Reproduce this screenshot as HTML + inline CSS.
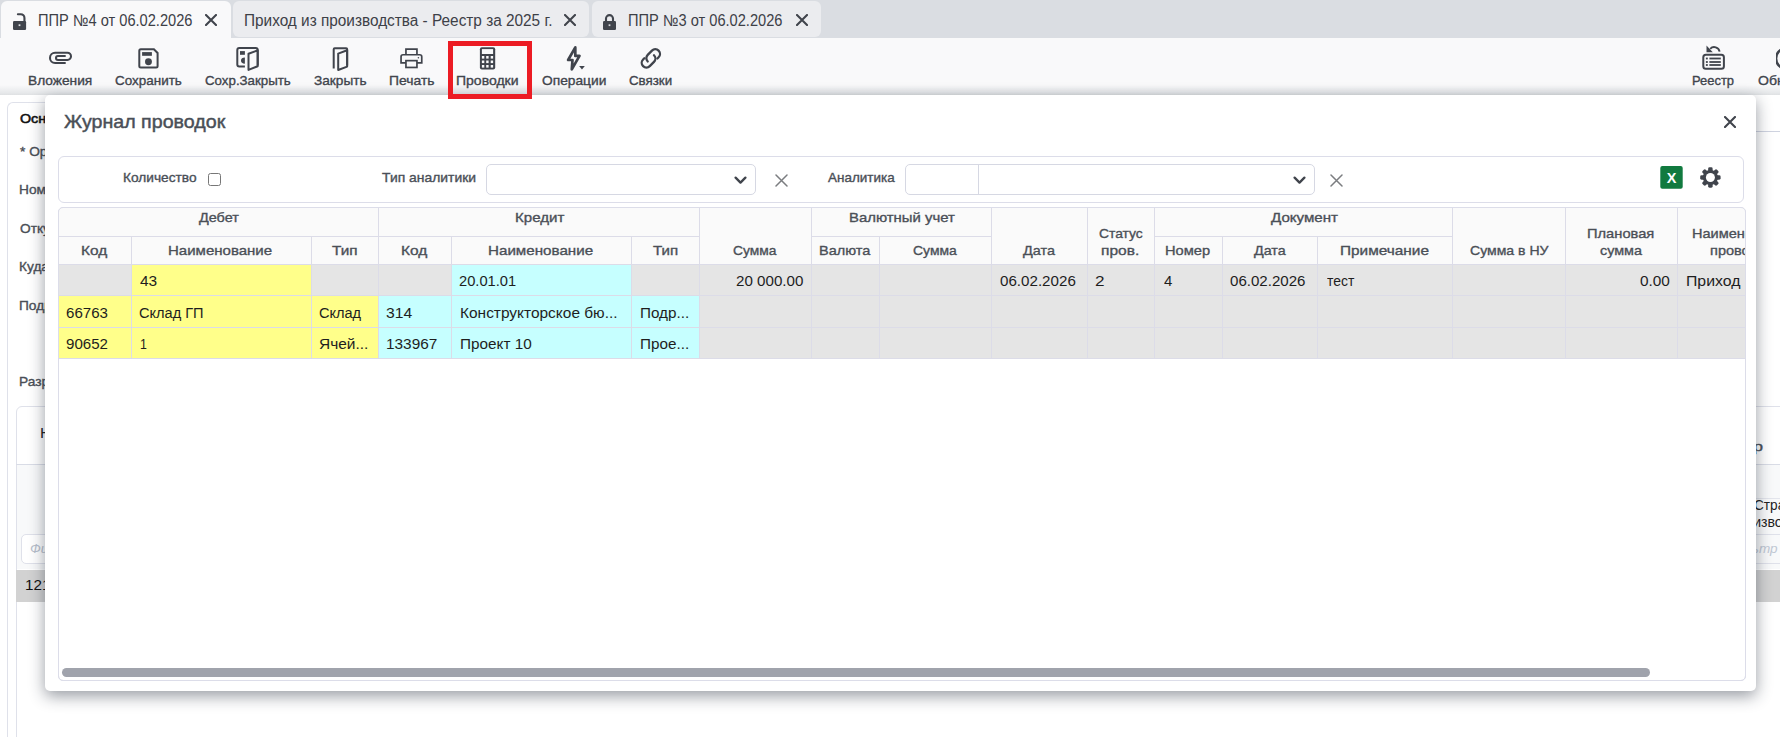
<!DOCTYPE html>
<html><head><meta charset="utf-8"><style>
html,body{margin:0;padding:0;width:1780px;height:737px;overflow:hidden;background:#fff;font-family:"Liberation Sans", sans-serif;}
.t{position:absolute;white-space:nowrap;}
.b{position:absolute;box-sizing:border-box;}
</style></head><body>
<div class="b" style="left:0px;top:0px;width:1780px;height:38px;background:#dadde2;"></div>
<div class="b" style="left:1px;top:1px;width:230px;height:38px;background:#f9f9fa;border-radius:6px 6px 0 0;"></div>
<div class="b" style="left:233px;top:1px;width:356px;height:36px;background:#ebecef;border-radius:6px;"></div>
<div class="b" style="left:592px;top:1px;width:229px;height:36px;background:#ebecef;border-radius:6px;"></div>
<svg class="b" style="left:13px;top:13px;" width="14" height="17" viewBox="0 0 14 17"><path d="M4.9 1.25 H7.75 A3.7 3.7 0 0 1 11.45 4.95 V8.5" fill="none" stroke="#40444c" stroke-width="2.1" stroke-linecap="round"/><rect x="0" y="8" width="13.1" height="8.9" rx="1.2" fill="#40444c"/><rect x="5.6" y="11.3" width="1.8" height="1.8" fill="#f8f9fa" opacity=".85"/></svg>
<svg class="b" style="left:603px;top:14px;" width="13" height="16" viewBox="0 0 13 16"><path d="M3 7 V4.6 A3.5 3.5 0 0 1 10 4.6 V7" fill="none" stroke="#40444c" stroke-width="2.1"/><rect x="0" y="7" width="13" height="9" rx="1.2" fill="#40444c"/><rect x="5.6" y="10.3" width="1.8" height="1.8" fill="#ebecef" opacity=".85"/></svg>
<div class="t" style="top:10.86px;font-size:16px;line-height:19.2px;font-weight:400;color:#3d4047;left:37.79px;transform:scaleX(0.9137);transform-origin:0 0;">ППР №4 от 06.02.2026</div>
<svg class="b" style="left:205px;top:14px;" width="12" height="12" viewBox="0 0 12 12"><path d="M1 1 L11 11 M11 1 L1 11" stroke="#40444c" stroke-width="2.1" stroke-linecap="round"/></svg>
<div class="t" style="top:10.86px;font-size:16px;line-height:19.2px;font-weight:400;color:#3d4047;left:243.84px;transform:scaleX(0.9596);transform-origin:0 0;">Приход из производства - Реестр за 2025 г.</div>
<svg class="b" style="left:564px;top:14px;" width="12" height="12" viewBox="0 0 12 12"><path d="M1 1 L11 11 M11 1 L1 11" stroke="#40444c" stroke-width="2.1" stroke-linecap="round"/></svg>
<div class="t" style="top:10.86px;font-size:16px;line-height:19.2px;font-weight:400;color:#3d4047;left:627.99px;transform:scaleX(0.9137);transform-origin:0 0;">ППР №3 от 06.02.2026</div>
<svg class="b" style="left:796px;top:14px;" width="12" height="12" viewBox="0 0 12 12"><path d="M1 1 L11 11 M11 1 L1 11" stroke="#40444c" stroke-width="2.1" stroke-linecap="round"/></svg>
<div class="b" style="left:0px;top:38px;width:1780px;height:57px;background:linear-gradient(#f9f9fa 0px,#f9f9fa 47px,#e6e8ea 55px,#dfe1e3 57px);"></div>
<div class="t" style="top:72.50px;font-size:13px;line-height:15.6px;font-weight:400;color:#41454d;-webkit-text-stroke:0.35px #41454d;left:27.94px;transform:scaleX(1.0559);transform-origin:0 0;">Вложения</div>
<div class="t" style="top:72.50px;font-size:13px;line-height:15.6px;font-weight:400;color:#41454d;-webkit-text-stroke:0.35px #41454d;left:114.80px;transform:scaleX(1.0344);transform-origin:0 0;">Сохранить</div>
<div class="t" style="top:72.50px;font-size:13px;line-height:15.6px;font-weight:400;color:#41454d;-webkit-text-stroke:0.35px #41454d;left:204.50px;transform:scaleX(1.0226);transform-origin:0 0;">Сохр.Закрыть</div>
<div class="t" style="top:72.50px;font-size:13px;line-height:15.6px;font-weight:400;color:#41454d;-webkit-text-stroke:0.35px #41454d;left:313.50px;transform:scaleX(1.0500);transform-origin:0 0;">Закрыть</div>
<div class="t" style="top:72.50px;font-size:13px;line-height:15.6px;font-weight:400;color:#41454d;-webkit-text-stroke:0.35px #41454d;left:388.63px;transform:scaleX(1.0683);transform-origin:0 0;">Печать</div>
<div class="t" style="top:72.50px;font-size:13px;line-height:15.6px;font-weight:400;color:#41454d;-webkit-text-stroke:0.35px #41454d;left:455.92px;transform:scaleX(1.0772);transform-origin:0 0;">Проводки</div>
<div class="t" style="top:72.50px;font-size:13px;line-height:15.6px;font-weight:400;color:#41454d;-webkit-text-stroke:0.35px #41454d;left:542.00px;transform:scaleX(1.0583);transform-origin:0 0;">Операции</div>
<div class="t" style="top:72.50px;font-size:13px;line-height:15.6px;font-weight:400;color:#41454d;-webkit-text-stroke:0.35px #41454d;left:629.30px;transform:scaleX(1.0238);transform-origin:0 0;">Связки</div>
<div class="t" style="top:72.50px;font-size:13px;line-height:15.6px;font-weight:400;color:#41454d;-webkit-text-stroke:0.35px #41454d;left:1692.20px;transform:scaleX(0.9951);transform-origin:0 0;">Реестр</div>
<div class="t" style="top:72.50px;font-size:13px;line-height:15.6px;font-weight:400;color:#41454d;-webkit-text-stroke:0.35px #41454d;left:1757.60px;transform:scaleX(1.0800);transform-origin:0 0;">Обновить</div>
<svg class="b" style="left:46px;top:48px;" width="28" height="18" viewBox="0 0 28 18"><path d="M19.7 8 H11.95 A1.95 1.95 0 0 0 11.95 11.9 H21.45 A3.55 3.55 0 0 0 21.45 4.8 H9.1 A5.1 5.1 0 0 0 9.1 15 H19.7" fill="none" stroke="#40444c" stroke-width="2.05"/></svg>
<svg class="b" style="left:136px;top:46px;" width="24" height="24" viewBox="0 0 24 24"><path d="M4.8 3.3 H17.9 L21.6 7 V19.9 Q21.6 21.4 20.1 21.4 H4.8 Q3.3 21.4 3.3 19.9 V4.8 Q3.3 3.3 4.8 3.3 Z" fill="none" stroke="#40444c" stroke-width="2"/><rect x="6.1" y="6.1" width="9.8" height="3.7" fill="#40444c"/><circle cx="12.45" cy="15.7" r="3.45" fill="#40444c"/></svg>
<svg class="b" style="left:235px;top:46px;" width="25" height="26" viewBox="0 0 25 26"><path d="M9.9 20.4 H4.3 Q2.3 20.4 2.3 18.4 V4.1 Q2.3 2.1 4.3 2.1 H20.7 Q22.7 2.1 22.7 4.1 V19.5" fill="none" stroke="#40444c" stroke-width="2"/><path d="M13.5 7.8 L22.7 4.3 V20.2 L13.5 23.9 Z" fill="none" stroke="#40444c" stroke-width="2" stroke-linejoin="round"/><rect x="5" y="5.1" width="4.9" height="3.7" fill="#40444c"/><path d="M9.9 11.4 A3.9 3.15 0 0 0 9.9 17.7 Z" fill="#40444c"/></svg>
<svg class="b" style="left:332px;top:46px;" width="18" height="26" viewBox="0 0 18 26"><path d="M1.7 22.6 V3.3 Q1.7 2.3 2.7 2.3 H14.15 Q15.15 2.3 15.15 3.3 V19.5" fill="none" stroke="#40444c" stroke-width="2"/><path d="M6.2 7.6 L15.15 4.2 V20.6 L6.2 24 Z" fill="none" stroke="#40444c" stroke-width="2" stroke-linejoin="round"/></svg>
<svg class="b" style="left:399px;top:47px;" width="25" height="23" viewBox="0 0 25 23"><path d="M6.95 7 V2.05 H17.95 V7" fill="none" stroke="#40444c" stroke-width="1.7"/><path d="M6.95 15.9 H2.05 V9.75 Q2.05 7.75 4.05 7.75 H20.75 Q22.75 7.75 22.75 9.75 V15.9 H17.95" fill="none" stroke="#40444c" stroke-width="1.7"/><rect x="6.95" y="13.65" width="11" height="6.8" fill="none" stroke="#40444c" stroke-width="1.7"/><circle cx="19.4" cy="10.7" r=".8" fill="#40444c"/></svg>
<svg class="b" style="left:479px;top:47px;" width="17" height="23" viewBox="0 0 17 23"><rect x="0.9" y="0.25" width="15.3" height="22.35" rx="2" fill="#40444c"/><rect x="2.9" y="2.1" width="11.2" height="4.9" fill="#f8f9fa"/><rect x="2.9" y="9" width="2.4" height="2.6" fill="#f8f9fa"/><rect x="2.9" y="13.5" width="2.4" height="2.6" fill="#f8f9fa"/><rect x="2.9" y="18" width="2.4" height="2.6" fill="#f8f9fa"/><rect x="7.2" y="9" width="2.4" height="2.6" fill="#f8f9fa"/><rect x="7.2" y="13.5" width="2.4" height="2.6" fill="#f8f9fa"/><rect x="7.2" y="18" width="2.4" height="2.6" fill="#f8f9fa"/><rect x="11.7" y="9" width="2.4" height="2.6" fill="#f8f9fa"/><rect x="11.7" y="13.5" width="2.4" height="2.6" fill="#f8f9fa"/><rect x="11.7" y="18" width="2.4" height="2.6" fill="#f8f9fa"/></svg>
<svg class="b" style="left:565px;top:45px;" width="21" height="27" viewBox="0 0 21 27"><path d="M10.3 2.4 L3.1 15.0 H7.5 L6.8 24.3 L14.5 10.9 H10.3 Z" fill="none" stroke="#40444c" stroke-width="2.7" stroke-linejoin="round"/><path d="M14.1 21 H19.8 L16.95 24.6 Z" fill="#40444c"/></svg>
<svg class="b" style="left:639px;top:47px;" width="24" height="24" viewBox="0 0 24 24"><g transform="translate(11.85 11.4) rotate(-45)" fill="none" stroke="#40444c" stroke-width="2.3" stroke-linecap="round"><path d="M4.56 4.7 H6.26 A4.7 4.7 0 0 0 6.26 -4.7 H0.26 A4.7 4.7 0 0 0 -4.44 0"/><path d="M-4.56 -4.7 H-6.26 A4.7 4.7 0 0 0 -6.26 4.7 H-0.26 A4.7 4.7 0 0 0 4.44 0"/></g></svg>
<svg class="b" style="left:1701px;top:45px;" width="25" height="26" viewBox="0 0 25 26"><rect x="2.3" y="9.8" width="20.6" height="13.9" rx="2.5" fill="none" stroke="#40444c" stroke-width="2"/><rect x="4.9" y="12.6" width="1.9" height="1.8" fill="#40444c"/><rect x="8.4" y="12.6" width="11.4" height="1.8" fill="#40444c"/><rect x="4.9" y="16.1" width="1.9" height="1.8" fill="#40444c"/><rect x="8.4" y="16.1" width="11.4" height="1.8" fill="#40444c"/><rect x="4.9" y="19.1" width="1.9" height="1.8" fill="#40444c"/><rect x="8.4" y="19.1" width="11.4" height="1.8" fill="#40444c"/><path d="M9.2 3.8 A5.5 5.5 0 0 1 18.6 6.6" fill="none" stroke="#40444c" stroke-width="1.9"/><path d="M5.5 0.6 V7.3 H11.8 Z" fill="#40444c"/></svg>
<svg class="b" style="left:1776px;top:47px;" width="12" height="24" viewBox="0 0 12 24"><path d="M10 1.5 A10 10 0 0 0 10 21.5" fill="none" stroke="#40444c" stroke-width="2.6"/></svg>
<div class="b" style="left:7px;top:102px;width:1745px;height:700px;border:1px solid #dfe1ea;border-right:none;border-radius:6px 0 0 6px;background:#fff;"></div>
<div class="t" style="top:111.20px;font-size:13px;line-height:15.6px;font-weight:400;color:#111;-webkit-text-stroke:0.55px #111;left:20.00px;transform:scaleX(1.1000);transform-origin:0 0;">Основное</div>
<div class="b" style="left:1700px;top:131px;width:80px;height:1px;background:#cfd3e0;"></div>
<div class="t" style="top:144.78px;font-size:12.7px;line-height:15.24px;font-weight:400;color:#4a4f57;-webkit-text-stroke:0.35px #4a4f57;left:20.30px;transform:scaleX(1.0800);transform-origin:0 0;">* Организация</div>
<div class="t" style="top:182.68px;font-size:12.7px;line-height:15.24px;font-weight:400;color:#4a4f57;-webkit-text-stroke:0.35px #4a4f57;left:19.22px;transform:scaleX(1.0800);transform-origin:0 0;">Номер</div>
<div class="t" style="top:221.68px;font-size:12.7px;line-height:15.24px;font-weight:400;color:#4a4f57;-webkit-text-stroke:0.35px #4a4f57;left:20.30px;transform:scaleX(1.0800);transform-origin:0 0;">Откуда</div>
<div class="t" style="top:259.98px;font-size:12.7px;line-height:15.24px;font-weight:400;color:#4a4f57;-webkit-text-stroke:0.35px #4a4f57;left:19.22px;transform:scaleX(1.0800);transform-origin:0 0;">Куда</div>
<div class="t" style="top:298.68px;font-size:12.7px;line-height:15.24px;font-weight:400;color:#4a4f57;-webkit-text-stroke:0.35px #4a4f57;left:19.22px;transform:scaleX(1.0800);transform-origin:0 0;">Подразделение</div>
<div class="t" style="top:374.88px;font-size:12.7px;line-height:15.24px;font-weight:400;color:#4a4f57;-webkit-text-stroke:0.35px #4a4f57;left:19.22px;transform:scaleX(1.0800);transform-origin:0 0;">Разработчик</div>
<div class="b" style="left:16px;top:406px;width:1800px;height:400px;border:1px solid #dfe1ea;border-radius:6px;"></div>
<div class="t" style="top:423.80px;font-size:15px;line-height:18.0px;font-weight:400;color:#222;left:39.75px;transform:scaleX(1.0500);transform-origin:0 0;">Номенклатура</div>
<div class="b" style="left:17px;top:464px;width:1800px;height:105px;background:#f8f9fa;"></div>
<div class="b" style="left:16px;top:464px;width:1800px;height:1px;background:#d9dce6;"></div>
<div class="b" style="left:1700px;top:498px;width:80px;height:1px;background:#e3e5ec;"></div>
<div class="b" style="left:1700px;top:534px;width:80px;height:1px;background:#dfe1ea;"></div>
<div class="b" style="left:1700px;top:563px;width:80px;height:1px;background:#dfe1ea;"></div>
<div class="b" style="left:21px;top:534px;width:200px;height:30px;border:1px solid #dfe1ea;border-radius:5px;background:#fff;"></div>
<div class="t" style="top:541.22px;font-size:13.5px;line-height:16.2px;font-weight:400;color:#b8c0cc;font-style:italic;left:30.00px;">Фильтр</div>
<div class="b" style="left:16px;top:570px;width:1800px;height:32px;background:#d2d2d2;"></div>
<div class="t" style="top:576.69px;font-size:14.8px;line-height:17.76px;font-weight:400;color:#111;left:24.77px;transform:scaleX(1.0300);transform-origin:0 0;">121</div>
<div class="t" style="top:440.08px;font-size:12.7px;line-height:15.24px;font-weight:400;color:#4a4f57;-webkit-text-stroke:0.35px #4a4f57;left:1708.62px;transform:scaleX(1.3842);transform-origin:0 0;">Номер</div>
<div class="t" style="top:496.99px;font-size:14.8px;line-height:17.76px;font-weight:400;color:#222;left:1754.38px;transform:scaleX(0.9200);transform-origin:0 0;">Страна</div>
<div class="t" style="top:513.69px;font-size:14.8px;line-height:17.76px;font-weight:400;color:#222;left:1730.05px;transform:scaleX(0.9500);transform-origin:0 0;">производства</div>
<div class="t" style="top:541.22px;font-size:13.5px;line-height:16.2px;font-weight:400;color:#c0c8d4;font-style:italic;left:1726.00px;">Фильтр по</div>
<div class="b" style="left:45px;top:95px;width:1711px;height:596px;background:#fff;border-radius:5px;box-shadow:0 5px 16px rgba(28,38,52,.46);"></div>
<div class="t" style="top:111.42px;font-size:19px;line-height:22.8px;font-weight:400;color:#4a4f57;-webkit-text-stroke:0.45px #4a4f57;left:63.70px;transform:scaleX(1.0333);transform-origin:0 0;">Журнал проводок</div>
<svg class="b" style="left:1723.5px;top:115.6px;" width="12" height="12" viewBox="0 0 12 12"><path d="M1 1 L11 11 M11 1 L1 11" stroke="#40444c" stroke-width="2.1" stroke-linecap="round"/></svg>
<div class="b" style="left:58px;top:156px;width:1686px;height:47px;border:1px solid #dcdde9;border-radius:6px;"></div>
<div class="t" style="top:171.07px;font-size:12.6px;line-height:15.12px;font-weight:400;color:#4a4f57;-webkit-text-stroke:0.35px #4a4f57;left:122.91px;transform:scaleX(1.0881);transform-origin:0 0;">Количество</div>
<div class="b" style="left:208px;top:173px;width:13px;height:13px;border:1.3px solid #777;border-radius:2.5px;"></div>
<div class="t" style="top:171.17px;font-size:12.6px;line-height:15.12px;font-weight:400;color:#4a4f57;-webkit-text-stroke:0.35px #4a4f57;left:382.40px;transform:scaleX(1.1035);transform-origin:0 0;">Тип аналитики</div>
<div class="b" style="left:486px;top:164px;width:270px;height:31px;border:1px solid #d6d8e3;border-radius:5px;"></div>
<svg class="b" style="left:733.5px;top:175.5px;" width="13" height="9" viewBox="0 0 13 9"><path d="M1.6 1.6 L6.5 6.6 L11.4 1.6" fill="none" stroke="#40444c" stroke-width="2.3" stroke-linecap="round" stroke-linejoin="round"/></svg>
<svg class="b" style="left:774.5px;top:173.5px;" width="13" height="13" viewBox="0 0 13 13"><path d="M1 1 L12 12 M12 1 L1 12" stroke="#7b7d80" stroke-width="1.5" stroke-linecap="round"/></svg>
<div class="t" style="top:171.17px;font-size:12.6px;line-height:15.12px;font-weight:400;color:#4a4f57;-webkit-text-stroke:0.35px #4a4f57;left:828.10px;transform:scaleX(1.0698);transform-origin:0 0;">Аналитика</div>
<div class="b" style="left:905px;top:164px;width:410px;height:31px;border:1px solid #d6d8e3;border-radius:5px;"></div>
<div class="b" style="left:978px;top:165px;width:1px;height:29px;background:#d6d8e3;"></div>
<svg class="b" style="left:1292.5px;top:175.5px;" width="13" height="9" viewBox="0 0 13 9"><path d="M1.6 1.6 L6.5 6.6 L11.4 1.6" fill="none" stroke="#40444c" stroke-width="2.3" stroke-linecap="round" stroke-linejoin="round"/></svg>
<svg class="b" style="left:1330px;top:173.5px;" width="13" height="13" viewBox="0 0 13 13"><path d="M1 1 L12 12 M12 1 L1 12" stroke="#7b7d80" stroke-width="1.5" stroke-linecap="round"/></svg>
<svg class="b" style="left:1660px;top:166px;" width="23" height="23" viewBox="0 0 23 23"><rect x="0.3" y="0.1" width="22.4" height="22.6" rx="2" fill="#117a3f"/><text x="11.5" y="17" text-anchor="middle" font-family="Liberation Sans" font-weight="700" font-size="14.5" fill="#fff">X</text></svg>
<svg class="b" style="left:1699px;top:166px;" width="23" height="23" viewBox="0 0 23 23"><g transform="translate(11.4 11.5)"><rect x="-2.25" y="-10.2" width="4.5" height="5" rx="1.4" transform="rotate(0)" fill="#40444c"/><rect x="-2.25" y="-10.2" width="4.5" height="5" rx="1.4" transform="rotate(45)" fill="#40444c"/><rect x="-2.25" y="-10.2" width="4.5" height="5" rx="1.4" transform="rotate(90)" fill="#40444c"/><rect x="-2.25" y="-10.2" width="4.5" height="5" rx="1.4" transform="rotate(135)" fill="#40444c"/><rect x="-2.25" y="-10.2" width="4.5" height="5" rx="1.4" transform="rotate(180)" fill="#40444c"/><rect x="-2.25" y="-10.2" width="4.5" height="5" rx="1.4" transform="rotate(225)" fill="#40444c"/><rect x="-2.25" y="-10.2" width="4.5" height="5" rx="1.4" transform="rotate(270)" fill="#40444c"/><rect x="-2.25" y="-10.2" width="4.5" height="5" rx="1.4" transform="rotate(315)" fill="#40444c"/><circle r="7.6" fill="#40444c"/><circle r="4.5" fill="#fff"/></g></svg>
<div class="b" style="left:58px;top:207px;width:1688px;height:474px;border:1px solid #dcdde9;border-radius:5px;overflow:hidden;background:#fff;"></div>
<div class="b" style="left:59px;top:208px;width:1686px;height:56px;background:#fafafa;"></div>
<div class="b" style="left:59px;top:264px;width:1686px;height:31px;background:#e5e5e5;"></div>
<div class="b" style="left:58px;top:264px;width:73px;height:31px;background:#e5e5e5;"></div>
<div class="b" style="left:131px;top:264px;width:180px;height:31px;background:#ffff8a;"></div>
<div class="b" style="left:311px;top:264px;width:67px;height:31px;background:#e5e5e5;"></div>
<div class="b" style="left:378px;top:264px;width:73px;height:31px;background:#e5e5e5;"></div>
<div class="b" style="left:451px;top:264px;width:180px;height:31px;background:#c6ffff;"></div>
<div class="b" style="left:631px;top:264px;width:68px;height:31px;background:#e5e5e5;"></div>
<div class="b" style="left:59px;top:295px;width:1686px;height:32px;background:#e5e5e5;"></div>
<div class="b" style="left:58px;top:295px;width:73px;height:32px;background:#ffff8a;"></div>
<div class="b" style="left:131px;top:295px;width:180px;height:32px;background:#ffff8a;"></div>
<div class="b" style="left:311px;top:295px;width:67px;height:32px;background:#ffff8a;"></div>
<div class="b" style="left:378px;top:295px;width:73px;height:32px;background:#c6ffff;"></div>
<div class="b" style="left:451px;top:295px;width:180px;height:32px;background:#c6ffff;"></div>
<div class="b" style="left:631px;top:295px;width:68px;height:32px;background:#c6ffff;"></div>
<div class="b" style="left:59px;top:327px;width:1686px;height:31px;background:#e5e5e5;"></div>
<div class="b" style="left:58px;top:327px;width:73px;height:31px;background:#ffff8a;"></div>
<div class="b" style="left:131px;top:327px;width:180px;height:31px;background:#ffff8a;"></div>
<div class="b" style="left:311px;top:327px;width:67px;height:31px;background:#ffff8a;"></div>
<div class="b" style="left:378px;top:327px;width:73px;height:31px;background:#c6ffff;"></div>
<div class="b" style="left:451px;top:327px;width:180px;height:31px;background:#c6ffff;"></div>
<div class="b" style="left:631px;top:327px;width:68px;height:31px;background:#c6ffff;"></div>
<div class="b" style="left:59px;top:236px;width:320px;height:1px;background:#dcdce8;"></div>
<div class="b" style="left:378px;top:236px;width:321px;height:1px;background:#dcdce8;"></div>
<div class="b" style="left:811px;top:236px;width:180px;height:1px;background:#dcdce8;"></div>
<div class="b" style="left:1154px;top:236px;width:298px;height:1px;background:#dcdce8;"></div>
<div class="b" style="left:59px;top:264px;width:1686px;height:1px;background:#dcdce8;"></div>
<div class="b" style="left:59px;top:295px;width:1686px;height:1px;background:#dcdce8;"></div>
<div class="b" style="left:59px;top:327px;width:1686px;height:1px;background:#dcdce8;"></div>
<div class="b" style="left:59px;top:358px;width:1686px;height:1px;background:#dcdce8;"></div>
<div class="b" style="left:378px;top:208px;width:1px;height:150px;background:#dcdce8;"></div>
<div class="b" style="left:699px;top:208px;width:1px;height:150px;background:#dcdce8;"></div>
<div class="b" style="left:811px;top:208px;width:1px;height:150px;background:#dcdce8;"></div>
<div class="b" style="left:991px;top:208px;width:1px;height:150px;background:#dcdce8;"></div>
<div class="b" style="left:1087px;top:208px;width:1px;height:150px;background:#dcdce8;"></div>
<div class="b" style="left:1154px;top:208px;width:1px;height:150px;background:#dcdce8;"></div>
<div class="b" style="left:1452px;top:208px;width:1px;height:150px;background:#dcdce8;"></div>
<div class="b" style="left:1565px;top:208px;width:1px;height:150px;background:#dcdce8;"></div>
<div class="b" style="left:1677px;top:208px;width:1px;height:150px;background:#dcdce8;"></div>
<div class="b" style="left:131px;top:236px;width:1px;height:122px;background:#dcdce8;"></div>
<div class="b" style="left:311px;top:236px;width:1px;height:122px;background:#dcdce8;"></div>
<div class="b" style="left:451px;top:236px;width:1px;height:122px;background:#dcdce8;"></div>
<div class="b" style="left:631px;top:236px;width:1px;height:122px;background:#dcdce8;"></div>
<div class="b" style="left:879px;top:236px;width:1px;height:122px;background:#dcdce8;"></div>
<div class="b" style="left:1222px;top:236px;width:1px;height:122px;background:#dcdce8;"></div>
<div class="b" style="left:1317px;top:236px;width:1px;height:122px;background:#dcdce8;"></div>
<div class="t" style="top:210.43px;font-size:13.6px;line-height:16.32px;font-weight:400;color:#4a4f57;-webkit-text-stroke:0.35px #4a4f57;left:198.80px;transform:scaleX(1.0605);transform-origin:0 0;">Дебет</div>
<div class="t" style="top:210.43px;font-size:13.6px;line-height:16.32px;font-weight:400;color:#4a4f57;-webkit-text-stroke:0.35px #4a4f57;left:514.79px;transform:scaleX(1.1091);transform-origin:0 0;">Кредит</div>
<div class="t" style="top:210.43px;font-size:13.6px;line-height:16.32px;font-weight:400;color:#4a4f57;-webkit-text-stroke:0.35px #4a4f57;left:849.30px;transform:scaleX(1.0958);transform-origin:0 0;">Валютный учет</div>
<div class="t" style="top:210.43px;font-size:13.6px;line-height:16.32px;font-weight:400;color:#4a4f57;-webkit-text-stroke:0.35px #4a4f57;left:1271.30px;transform:scaleX(1.1117);transform-origin:0 0;">Документ</div>
<div class="t" style="top:243.33px;font-size:13.6px;line-height:16.32px;font-weight:400;color:#4a4f57;-webkit-text-stroke:0.35px #4a4f57;left:80.97px;transform:scaleX(1.1318);transform-origin:0 0;">Код</div>
<div class="t" style="top:243.33px;font-size:13.6px;line-height:16.32px;font-weight:400;color:#4a4f57;-webkit-text-stroke:0.35px #4a4f57;left:168.30px;transform:scaleX(1.1043);transform-origin:0 0;">Наименование</div>
<div class="t" style="top:243.33px;font-size:13.6px;line-height:16.32px;font-weight:400;color:#4a4f57;-webkit-text-stroke:0.35px #4a4f57;left:332.20px;transform:scaleX(1.1273);transform-origin:0 0;">Тип</div>
<div class="t" style="top:243.33px;font-size:13.6px;line-height:16.32px;font-weight:400;color:#4a4f57;-webkit-text-stroke:0.35px #4a4f57;left:401.26px;transform:scaleX(1.1364);transform-origin:0 0;">Код</div>
<div class="t" style="top:243.33px;font-size:13.6px;line-height:16.32px;font-weight:400;color:#4a4f57;-webkit-text-stroke:0.35px #4a4f57;left:488.38px;transform:scaleX(1.1151);transform-origin:0 0;">Наименование</div>
<div class="t" style="top:243.33px;font-size:13.6px;line-height:16.32px;font-weight:400;color:#4a4f57;-webkit-text-stroke:0.35px #4a4f57;left:652.70px;transform:scaleX(1.1091);transform-origin:0 0;">Тип</div>
<div class="t" style="top:243.33px;font-size:13.6px;line-height:16.32px;font-weight:400;color:#4a4f57;-webkit-text-stroke:0.35px #4a4f57;left:733.00px;transform:scaleX(1.0163);transform-origin:0 0;">Сумма</div>
<div class="t" style="top:243.33px;font-size:13.6px;line-height:16.32px;font-weight:400;color:#4a4f57;-webkit-text-stroke:0.35px #4a4f57;left:818.83px;transform:scaleX(1.0681);transform-origin:0 0;">Валюта</div>
<div class="t" style="top:243.33px;font-size:13.6px;line-height:16.32px;font-weight:400;color:#4a4f57;-webkit-text-stroke:0.35px #4a4f57;left:912.90px;transform:scaleX(1.0256);transform-origin:0 0;">Сумма</div>
<div class="t" style="top:243.33px;font-size:13.6px;line-height:16.32px;font-weight:400;color:#4a4f57;-webkit-text-stroke:0.35px #4a4f57;left:1022.90px;transform:scaleX(1.0600);transform-origin:0 0;">Дата</div>
<div class="t" style="top:226.43px;font-size:13.6px;line-height:16.32px;font-weight:400;color:#4a4f57;-webkit-text-stroke:0.35px #4a4f57;left:1099.00px;transform:scaleX(1.0186);transform-origin:0 0;">Статус</div>
<div class="t" style="top:243.33px;font-size:13.6px;line-height:16.32px;font-weight:400;color:#4a4f57;-webkit-text-stroke:0.35px #4a4f57;left:1101.16px;transform:scaleX(1.1438);transform-origin:0 0;">пров.</div>
<div class="t" style="top:243.33px;font-size:13.6px;line-height:16.32px;font-weight:400;color:#4a4f57;-webkit-text-stroke:0.35px #4a4f57;left:1165.12px;transform:scaleX(1.0780);transform-origin:0 0;">Номер</div>
<div class="t" style="top:243.33px;font-size:13.6px;line-height:16.32px;font-weight:400;color:#4a4f57;-webkit-text-stroke:0.35px #4a4f57;left:1253.70px;transform:scaleX(1.0533);transform-origin:0 0;">Дата</div>
<div class="t" style="top:243.33px;font-size:13.6px;line-height:16.32px;font-weight:400;color:#4a4f57;-webkit-text-stroke:0.35px #4a4f57;left:1340.37px;transform:scaleX(1.1312);transform-origin:0 0;">Примечание</div>
<div class="t" style="top:243.33px;font-size:13.6px;line-height:16.32px;font-weight:400;color:#4a4f57;-webkit-text-stroke:0.35px #4a4f57;left:1469.70px;transform:scaleX(1.0342);transform-origin:0 0;">Сумма в НУ</div>
<div class="t" style="top:226.43px;font-size:13.6px;line-height:16.32px;font-weight:400;color:#4a4f57;-webkit-text-stroke:0.35px #4a4f57;left:1587.12px;transform:scaleX(1.0803);transform-origin:0 0;">Плановая</div>
<div class="t" style="top:243.33px;font-size:13.6px;line-height:16.32px;font-weight:400;color:#4a4f57;-webkit-text-stroke:0.35px #4a4f57;left:1600.00px;transform:scaleX(1.0575);transform-origin:0 0;">сумма</div>
<div class="b" style="left:1678px;top:208px;width:67px;height:56px;overflow:hidden;"><div class="b" style="left:-1678px;top:-208px;width:1780px;height:300px;"><div class="t" style="top:226.43px;font-size:13.6px;line-height:16.32px;font-weight:400;color:#4a4f57;-webkit-text-stroke:0.35px #4a4f57;left:1692.33px;transform:scaleX(1.0700);transform-origin:0 0;">Наименование</div>
<div class="t" style="top:243.33px;font-size:13.6px;line-height:16.32px;font-weight:400;color:#4a4f57;-webkit-text-stroke:0.35px #4a4f57;left:1710.43px;transform:scaleX(1.0700);transform-origin:0 0;">проводки</div>
</div></div><div class="t" style="top:272.11px;font-size:15.2px;line-height:18.24px;font-weight:400;color:#1e1e1e;left:139.90px;transform:scaleX(1.0187);transform-origin:0 0;">43</div>
<div class="t" style="top:272.11px;font-size:15.2px;line-height:18.24px;font-weight:400;color:#1e1e1e;left:459.43px;transform:scaleX(0.9672);transform-origin:0 0;">20.01.01</div>
<div class="t" style="top:272.11px;font-size:15.2px;line-height:18.24px;font-weight:400;color:#1e1e1e;left:736.40px;transform:scaleX(0.9970);transform-origin:0 0;">20 000.00</div>
<div class="t" style="top:272.11px;font-size:15.2px;line-height:18.24px;font-weight:400;color:#1e1e1e;left:999.60px;transform:scaleX(0.9973);transform-origin:0 0;">06.02.2026</div>
<div class="t" style="top:272.11px;font-size:15.2px;line-height:18.24px;font-weight:400;color:#1e1e1e;left:1094.87px;transform:scaleX(1.1286);transform-origin:0 0;">2</div>
<div class="t" style="top:272.11px;font-size:15.2px;line-height:18.24px;font-weight:400;color:#1e1e1e;left:1163.80px;transform:scaleX(0.9875);transform-origin:0 0;">4</div>
<div class="t" style="top:272.11px;font-size:15.2px;line-height:18.24px;font-weight:400;color:#1e1e1e;left:1230.31px;transform:scaleX(0.9932);transform-origin:0 0;">06.02.2026</div>
<div class="t" style="top:272.11px;font-size:15.2px;line-height:18.24px;font-weight:400;color:#1e1e1e;left:1327.30px;transform:scaleX(0.9167);transform-origin:0 0;">тест</div>
<div class="t" style="top:272.11px;font-size:15.2px;line-height:18.24px;font-weight:400;color:#1e1e1e;left:1640.19px;transform:scaleX(1.0107);transform-origin:0 0;">0.00</div>
<div class="t" style="top:272.11px;font-size:15.2px;line-height:18.24px;font-weight:400;color:#1e1e1e;left:1685.96px;transform:scaleX(1.0412);transform-origin:0 0;">Приход</div>
<div class="t" style="top:304.31px;font-size:15.2px;line-height:18.24px;font-weight:400;color:#1e1e1e;left:66.11px;transform:scaleX(0.9927);transform-origin:0 0;">66763</div>
<div class="t" style="top:304.31px;font-size:15.2px;line-height:18.24px;font-weight:400;color:#1e1e1e;left:139.14px;transform:scaleX(0.9585);transform-origin:0 0;">Склад ГП</div>
<div class="t" style="top:304.31px;font-size:15.2px;line-height:18.24px;font-weight:400;color:#1e1e1e;left:319.14px;transform:scaleX(0.9581);transform-origin:0 0;">Склад</div>
<div class="t" style="top:304.31px;font-size:15.2px;line-height:18.24px;font-weight:400;color:#1e1e1e;left:386.27px;transform:scaleX(1.0333);transform-origin:0 0;">314</div>
<div class="t" style="top:304.31px;font-size:15.2px;line-height:18.24px;font-weight:400;color:#1e1e1e;left:460.18px;transform:scaleX(1.0176);transform-origin:0 0;">Конструкторское бю...</div>
<div class="t" style="top:304.31px;font-size:15.2px;line-height:18.24px;font-weight:400;color:#1e1e1e;left:640.00px;transform:scaleX(1.0043);transform-origin:0 0;">Подр...</div>
<div class="t" style="top:334.81px;font-size:15.2px;line-height:18.24px;font-weight:400;color:#1e1e1e;left:66.11px;transform:scaleX(0.9927);transform-origin:0 0;">90652</div>
<div class="t" style="top:334.81px;font-size:15.2px;line-height:18.24px;font-weight:400;color:#1e1e1e;left:139.59px;transform:scaleX(0.8143);transform-origin:0 0;">1</div>
<div class="t" style="top:334.81px;font-size:15.2px;line-height:18.24px;font-weight:400;color:#1e1e1e;left:318.98px;transform:scaleX(1.0174);transform-origin:0 0;">Ячей...</div>
<div class="t" style="top:334.81px;font-size:15.2px;line-height:18.24px;font-weight:400;color:#1e1e1e;left:386.29px;transform:scaleX(1.0122);transform-origin:0 0;">133967</div>
<div class="t" style="top:334.81px;font-size:15.2px;line-height:18.24px;font-weight:400;color:#1e1e1e;left:460.19px;transform:scaleX(1.0071);transform-origin:0 0;">Проект 10</div>
<div class="t" style="top:334.81px;font-size:15.2px;line-height:18.24px;font-weight:400;color:#1e1e1e;left:640.00px;transform:scaleX(1.0043);transform-origin:0 0;">Прое...</div>
<div class="b" style="left:62px;top:668px;width:1588px;height:9px;background:#a0a3ac;border-radius:4.5px;"></div>
<div class="b" style="left:58px;top:207px;width:1688px;height:474px;border:1px solid #dcdde9;border-radius:5px;"></div>
<div class="b" style="left:448px;top:41px;width:84px;height:58px;border:5px solid #ec1c24;"></div>
</body></html>
